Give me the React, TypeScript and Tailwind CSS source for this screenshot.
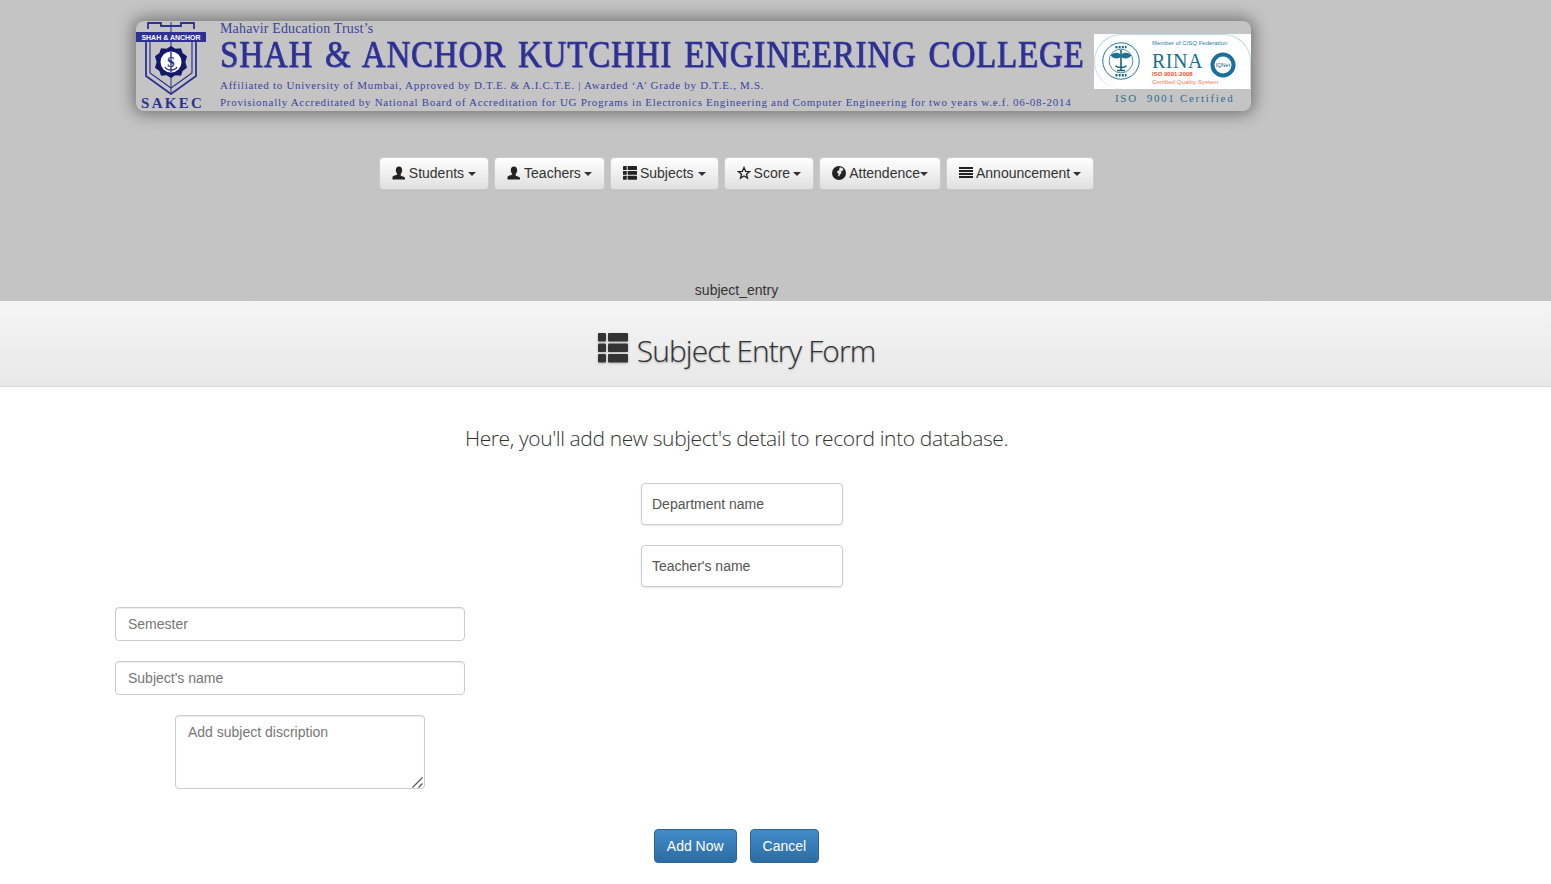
import React from 'react';

const navy = '#2e3192';

const UserIcon = () => (
  <svg viewBox="0 0 14 14" className="w-[14px] h-[14px] -mt-[2px]" fill="#222">
    <path d="M7 0.5c2 0 3.2 1.500 3.200 3.600 0 1.600-.7 3.100-1.500 3.900v1.200c0 .5 1 .9 2.200 1.300 1.100.4 2 .9 2.100 1.500v1.500H.5V11c.1-.6 1-1.100 2.100-1.500 1.200-.4 2.700-.8 2.700-1.300V8c-.8-.8-1.500-2.300-1.500-3.900C3.800 2 5 .5 7 .5z" />
  </svg>
);

const ThList = ({ className, fill = '#222' }: { className: string; fill?: string }) => (
  <svg viewBox="0 0 30 30" className={className} fill={fill}>
    <rect x="0" y="0" width="8" height="8.500" rx="1" />
    <rect x="0" y="10.500" width="8" height="8.500" rx="1" />
    <rect x="0" y="21" width="8" height="8.500" rx="1" />
    <rect x="10" y="0" width="20" height="8.500" rx="1" />
    <rect x="10" y="10.500" width="20" height="8.500" rx="1" />
    <rect x="10" y="21" width="20" height="8.500" rx="1" />
  </svg>
);

const StarIcon = () => (
  <svg viewBox="0 0 14 14" className="w-[14px] h-[14px] -mt-[2px]" fill="none" stroke="#222" strokeWidth="1.300">
    <path d="M7 1.600l1.600 3.700 4 .3-3.100 2.600 1 3.900L7 10l-3.500 2.100 1-3.900L1.400 5.600l4-.3z" />
  </svg>
);

const GlobeIcon = () => (
  <svg viewBox="0 0 14 14" className="w-[14px] h-[14px] -mt-[2px]">
    <circle cx="7" cy="7" r="7" fill="#222" />
    <path d="M7.500 1.500c1.500-.3 3 .3 4 1.500l-.8 1.800-1.700.5.500 1.700-1.500 1.400-.8 2-1-.4.300-2.500-1.500-1 .6-1.700 1.500-.4z" fill="#e8e8e8" />
  </svg>
);

const AlignIcon = () => (
  <svg viewBox="0 0 14 14" className="w-[14px] h-[14px] -mt-[2px]" fill="#222">
    <rect y="1" width="14" height="2" />
    <rect y="4" width="14" height="2" />
    <rect y="7" width="14" height="2" />
    <rect y="10" width="14" height="2" />
  </svg>
);

const Caret = () => (
  <span className="inline-block w-0 h-0 border-x-4 border-x-transparent border-t-4 border-t-[#333]" />
);

const ResizeHandle = () => (
  <svg viewBox="0 0 11 11" className="absolute right-[2px] bottom-[1px] w-[11px] h-[11px] pointer-events-none" fill="none" stroke="#555" strokeWidth="1.200">
    <path d="M0.500 10.500L10.500 0.500M6.500 10.500L10.500 6.500" />
  </svg>
);

const SakecLogo = () => (
  <svg viewBox="0 0 70 74" className="w-[70px] h-[74px]" fill="none">
    <path d="M12 8V2h13v3h20V2h13v6" stroke={navy} strokeWidth="1.800" />
    <path d="M35 1v72" stroke={navy} strokeWidth="1" />
    <path d="M10 17v38l25 18 25-18V17" stroke={navy} strokeWidth="1.800" />
    <path d="M14 17v35l21 15 21-15V17" stroke={navy} strokeWidth="1.200" />
    <rect x="0" y="11" width="70" height="10" fill={navy} />
    <text x="35" y="18.500" textAnchor="middle" fill="#fff" fontSize="7" fontWeight="700" fontFamily="Liberation Sans, sans-serif">
      SHAH &amp; ANCHOR
    </text>
    <path d="M35 25l4.500 2.800 5.500-.6 1.600 4.800 4.400 3.300-1.600 5.700 1.600 5.700-4.400 3.300-1.600 4.800-5.500-.6-4.500 2.800-4.500-2.800-5.500.6-1.600-4.800-4.400-3.300 1.600-5.700-1.600-5.700 4.400-3.300 1.600-4.800 5.500.6z" fill="#14186b" />
    <circle cx="35" cy="41" r="10.500" fill="#fff" />
    <path d="M35 31v20M29 46c2 4 10 4 12 0" stroke={navy} strokeWidth="1.400" />
    <text x="35" y="46" textAnchor="middle" fill={navy} fontSize="14" fontWeight="700" fontFamily="Liberation Serif, serif">
      S
    </text>
  </svg>
);

const RinaSeal = () => (
  <svg viewBox="0 0 48 48" className="w-[38px] h-[38px] mt-[7px]" fill="none">
    <circle cx="24" cy="24" r="23" stroke="#1b7390" strokeWidth="1.200" />
    <circle cx="24" cy="24" r="15" stroke="#1b7390" strokeWidth="1" />
    <path d="M24 10v27M19 36h10M17 30c3 3 11 3 14 0" stroke="#14617c" strokeWidth="2" />
    <path d="M24 16C20 12 14 13 11 17c3 4 9 5 13 2 4 3 10 2 13-2-3-4-9-5-13-1z" fill="#1b7390" />
    <path d="M17 6.500h14M17 42h14" stroke="#14617c" strokeWidth="3" strokeDasharray="2.500 1.500" />
  </svg>
);

const QNetMark = () => (
  <svg viewBox="0 0 26 26" className="w-[26px] h-[26px] mt-[5px]" fill="none">
    <circle cx="13" cy="13" r="10.500" stroke="#1b6f9c" strokeWidth="4" />
    <rect x="5" y="10" width="16" height="6" fill="#fff" />
    <text x="13" y="15" textAnchor="middle" fill="#14617c" fontSize="5.500" fontFamily="Liberation Sans, sans-serif">IQNet</text>
  </svg>
);

const Banner = () => (
  <div className="ml-[136px] w-[1115px] h-[90px] rounded-lg bg-[#c4c4c4] shadow-[0_0_16px_3px_rgba(0,0,0,0.42)] flex font-['Liberation_Serif',serif] overflow-hidden">
    <div className="w-[84px] shrink-0 flex flex-col items-start">
      <SakecLogo />
      <div className="mt-[1px] ml-[5px] text-[15px] leading-[14px] font-bold tracking-[2.300px] text-[#2e3192]">SAKEC</div>
    </div>
    <div className="w-[874px] shrink-0 text-[#3b44a0] flex flex-col">
      <div className="text-[14px] leading-[16px] tracking-[0.16px] text-[#3b4499]">Mahavir Education Trust’s</div>
      <div className="text-[33px] leading-[34px] whitespace-nowrap font-normal tracking-[0.8px] [word-spacing:3px] [-webkit-text-stroke:0.6px_#2e3192] scale-y-[1.14] text-[#2e3192] [text-shadow:1px_1px_0_#8d90c8]">
        SHAH &amp; ANCHOR KUTCHHI ENGINEERING COLLEGE
      </div>
      <div className="text-[11px] leading-[14px] mt-[7px] whitespace-nowrap tracking-[0.7px]">
        Affiliated to University of Mumbai, Approved by D.T.E. &amp; A.I.C.T.E. | Awarded ‘A’ Grade by D.T.E., M.S.
      </div>
      <div className="text-[11px] leading-[14px] mt-[3px] whitespace-nowrap tracking-[0.707px]">
        Provisionally Accreditated by National Board of Accreditation for UG Programs in Electronics Engineering and Computer Engineering for two years w.e.f. 06-08-2014
      </div>
    </div>
    <div className="flex-1 flex flex-col pt-[13px]">
      <div className="h-[55px] bg-white font-['Liberation_Sans',sans-serif]">
        <div className="h-full rounded-l-[28px] rounded-tr-[28px] border border-b-0 border-[#bfdbe5] flex items-start pl-[7px]">
          <RinaSeal />
          <div className="ml-[12px] mt-[4px] flex flex-col">
            <div className="text-[6px] leading-[8px] text-[#2a7f9e] whitespace-nowrap">Member of CISQ Federation</div>
            <div className="flex">
              <div className="w-[58px] flex flex-col">
                <div className="font-['Liberation_Serif',serif] text-[20px] leading-[20px] mt-[4px] text-[#14708f] tracking-[0.5px]">RINA</div>
                <div className="text-[6px] leading-[7px] font-bold text-[#e8552b] whitespace-nowrap">ISO 9001:2008</div>
                <div className="text-[6.200px] leading-[7px] text-[#ee7a55] whitespace-nowrap">Certified Quality System</div>
              </div>
              <QNetMark />
            </div>
          </div>
        </div>
      </div>
      <div className="text-[11px] leading-[14px] mt-[2px] pl-[21px] tracking-[1.700px] whitespace-pre text-[#2b6f8e]">ISO  9001 Certified</div>
    </div>
  </div>
);

const navBtn =
  'h-[33px] px-[12px] flex items-center rounded border border-[#ccc] bg-gradient-to-b from-white to-[#e0e0e0] text-[#333] text-[14px] shadow-[0_1px_0_rgba(255,255,255,0.15),0_1px_1px_rgba(0,0,0,0.075)]';

const Nav = () => (
  <div className="mt-[46px] w-[1473px] flex justify-center gap-[5px]">
    <button className={navBtn}><UserIcon /><span className="ml-[3px] mr-1">Students</span><Caret /></button>
    <button className={navBtn}><UserIcon /><span className="ml-[3px] mr-[3px]">Teachers</span><Caret /></button>
    <button className={navBtn}><ThList className="w-[14px] h-[14px] -mt-[2px]" /><span className="ml-[3px] mr-1">Subjects</span><Caret /></button>
    <button className={navBtn}><StarIcon /><span className="ml-[3px] mr-[3px]">Score</span><Caret /></button>
    <button className={navBtn}><GlobeIcon /><span className="ml-[3px]">Attendence</span><Caret /></button>
    <button className={navBtn}><AlignIcon /><span className="ml-[3px] mr-[3px]">Announcement</span><Caret /></button>
  </div>
);

export default function App() {
  return (
    <div className="min-h-[884px] bg-white font-['Liberation_Sans',Arial,sans-serif] text-[#333] text-[14px] overflow-hidden">
      <header className="h-[301px] bg-[#c4c4c4] pt-[21px] flex flex-col">
        <Banner />
        <Nav />
        <div className="mt-auto w-[1473px] text-center leading-[20px] pb-[1px]">subject_entry</div>
      </header>

      <div className="h-[86px] bg-gradient-to-b from-[#f5f5f5] to-[#e8e8e8] border-b border-[#dcdcdc] pt-[14px] flex items-center">
        <div className="w-[1473px] flex justify-center items-center">
          <ThList className="w-[30px] h-[30px] -mt-[5px] drop-shadow-[0_1px_1px_rgba(0,0,0,0.25)]" fill="#333" />
          <h1 className="ml-[9px] text-[30px] leading-[36px] tracking-[-0.95px] font-light text-[#333] font-['Open_Sans',sans-serif] [text-shadow:0_1px_2px_rgba(0,0,0,0.3)]">
            Subject Entry Form
          </h1>
        </div>
      </div>

      <main className="flex flex-col">
        <p className="mt-[36px] w-[1473px] text-center text-[21px] leading-[30px] tracking-[-0.38px] font-light font-['Open_Sans',sans-serif]">
          Here, you'll add new subject's detail to record into database.
        </p>

        <input placeholder="Department name" className="mt-[30px] ml-[641px] w-[202px] h-[42px] px-[10px] bg-white border border-[#ccc] rounded placeholder:text-[#555] outline-none shadow-[0_1px_2px_rgba(0,0,0,0.1)]" />
        <input placeholder="Teacher's name" className="mt-[20px] ml-[641px] w-[202px] h-[42px] px-[10px] bg-white border border-[#ccc] rounded placeholder:text-[#555] outline-none shadow-[0_1px_2px_rgba(0,0,0,0.1)]" />
        <input placeholder="Semester" className="mt-[20px] ml-[115px] w-[350px] h-[34px] px-[12px] bg-white border border-[#ccc] rounded placeholder:text-[#777] outline-none shadow-[inset_0_1px_1px_rgba(0,0,0,0.075)]" />
        <input placeholder="Subject's name" className="mt-[20px] ml-[115px] w-[350px] h-[34px] px-[12px] bg-white border border-[#ccc] rounded placeholder:text-[#777] outline-none shadow-[inset_0_1px_1px_rgba(0,0,0,0.075)]" />
        <div className="relative mt-[20px] ml-[175px] w-[250px] h-[74px]">
          <textarea placeholder="Add subject discription" className="block w-full h-full px-[12px] py-[6px] bg-white border border-[#ccc] rounded placeholder:text-[#777] outline-none resize-none shadow-[inset_0_1px_1px_rgba(0,0,0,0.075)]" />
          <ResizeHandle />
        </div>

        <div className="mt-[40px] w-[1473px] flex justify-center gap-[13px]">
          <button className="h-[34px] px-[12px] rounded border border-[#2b669a] bg-gradient-to-b from-[#428bca] to-[#2d6ca2] text-white">Add Now</button>
          <button className="h-[34px] px-[12px] rounded border border-[#2b669a] bg-gradient-to-b from-[#428bca] to-[#2d6ca2] text-white">Cancel</button>
        </div>
      </main>
    </div>
  );
}
